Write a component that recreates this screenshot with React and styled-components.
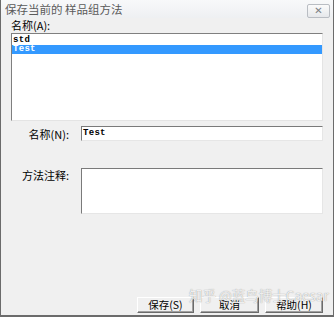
import React from "react";
import styled, { createGlobalStyle } from "styled-components";

const Global = createGlobalStyle`
  html, body { margin: 0; padding: 0; background: #f0f0f0; }
  body { font-family: "Noto Sans CJK SC", "Liberation Sans", sans-serif; }
  * { box-sizing: border-box; }
`;

const Window = styled.div`
  position: relative;
  width: 334px;
  height: 317px;
  display: flex;
  flex-direction: column;
  background: #f0f0f0;
  border-left: 1px solid #6b6b6b;
  border-right: 1px solid #6b6b6b;
  border-bottom: 2px solid #6b6b6b;
  overflow: hidden;
`;

const TitleBar = styled.div`
  height: 18px;
  flex: none;
  display: flex;
  align-items: center;
  justify-content: space-between;
  padding: 0 3px 0 4px;
  background: linear-gradient(#f8f9fa, #eef0f2);
`;

const Title = styled.span`
  font-size: 11.5px;
  color: #5a5a5a;
  line-height: 1;
  margin-top: 2px;
`;

const CloseBtn = styled.div`
  width: 23px;
  height: 14px;
  margin-top: 4px;
  border: 1px solid #b9bdc3;
  border-radius: 2px;
  background: linear-gradient(#fbfbfb, #e6e8eb);
  display: flex;
  align-items: center;
  justify-content: center;
  color: #7d8086;
  font-size: 10px;
  font-weight: bold;
  line-height: 1;
  font-family: "DejaVu Sans", sans-serif;
`;

const Body = styled.div`
  flex: 1;
  display: flex;
  flex-direction: column;
  padding: 1px 10px 2px 10px;
`;

const TopLabel = styled.div`
  font-size: 11px;
  line-height: 12px;
  height: 13px;
  color: #000;
`;

const ListBox = styled.div`
  margin-top: 1px;
  height: 88px;
  background: #fff;
  border-top: 1px solid #7f7f7f;
  border-left: 1px solid #7f7f7f;
  border-right: 1px solid #e4e4e4;
  border-bottom: 1px solid #e4e4e4;
  padding-top: 2px;
`;

const ListItem = styled.div`
  height: 9px;
  font-family: "Liberation Mono", monospace;
  font-size: 9px;
  font-weight: bold;
  line-height: 9px;
  padding-left: 1px;
  letter-spacing: 0.3px;
  color: ${(p) => (p.$selected ? "#fff" : "#000")};
  background: ${(p) => (p.$selected ? "#3399ff" : "transparent")};
`;

const FieldRow = styled.div`
  display: grid;
  grid-template-columns: 58px 1fr;
  column-gap: 12px;
  align-items: ${(p) => (p.$top ? "start" : "center")};
  margin-top: ${(p) => p.$mt}px;
`;

const FieldLabel = styled.div`
  text-align: right;
  font-size: 11px;
  line-height: 12px;
  color: #000;
  padding-top: ${(p) => (p.$top ? 1 : 0)}px;
`;

const Input = styled.div`
  height: ${(p) => p.$h}px;
  background: #fff;
  border-top: 1px solid #7a7a7a;
  border-left: 1px solid #7a7a7a;
  border-right: 1px solid #e6e6e6;
  border-bottom: 1px solid #e6e6e6;
  font-family: "Liberation Mono", monospace;
  font-size: 9px;
  font-weight: bold;
  line-height: 13px;
  padding-left: 1px;
  letter-spacing: 0.3px;
  color: #000;
`;

const Spacer = styled.div`
  flex: 1;
`;

const ButtonRow = styled.div`
  display: flex;
  justify-content: flex-end;
  gap: 6px;
`;

const Button = styled.div`
  width: ${(p) => p.$w}px;
  height: 16px;
  background: #f0f0f0;
  border-top: 1px solid #fff;
  border-left: 1px solid #fff;
  border-right: 1px solid #6b6b6b;
  border-bottom: 1px solid #6b6b6b;
  box-shadow: inset -1px -1px 0 #a0a0a0;
  display: flex;
  align-items: center;
  justify-content: center;
  font-size: 10.5px;
  color: #000;
  line-height: 1;
`;

const Watermark = styled.div`
  position: absolute;
  left: 188px;
  top: 286px;
  font-size: 13.5px;
  line-height: 18px;
  white-space: nowrap;
  color: rgba(255, 255, 255, 0.85);
  text-shadow: 0 0 1px rgba(60, 60, 60, 0.6);
  pointer-events: none;
`;

export default function App() {
  return (
    <>
      <Global />
      <Window>
        <TitleBar>
          <Title>保存当前的 样品组方法</Title>
          <CloseBtn>✕</CloseBtn>
        </TitleBar>
        <Body>
          <TopLabel>名称(A):</TopLabel>
          <ListBox>
            <ListItem>std</ListItem>
            <ListItem $selected>Test</ListItem>
          </ListBox>
          <FieldRow $mt={5}>
            <FieldLabel>名称(N):</FieldLabel>
            <Input $h={15}>Test</Input>
          </FieldRow>
          <FieldRow $mt={27} $top>
            <FieldLabel $top>方法注释:</FieldLabel>
            <Input $h={46} />
          </FieldRow>
          <Spacer />
          <ButtonRow>
            <Button $w={57}>保存(S)</Button>
            <Button $w={59}>取消</Button>
            <Button $w={58}>帮助(H)</Button>
          </ButtonRow>
        </Body>
        <Watermark>知乎 @蓝鸟博士Caesar</Watermark>
      </Window>
    </>
  );
}
